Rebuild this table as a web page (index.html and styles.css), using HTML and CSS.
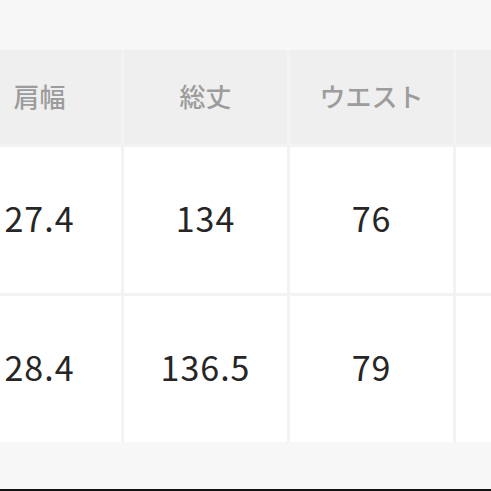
FILE: index.html
```html
<!DOCTYPE html>
<html lang="ja">
<head>
<meta charset="utf-8">
<link rel="stylesheet" href="styles.css">
</head>
<body>
<div class="page">
  <div class="table">
    <div class="cell head">肩幅</div>
    <div class="cell head">総丈</div>
    <div class="cell head">ウエスト</div>
    <div class="cell head"></div>

    <div class="cell">27.4</div>
    <div class="cell">134</div>
    <div class="cell">76</div>
    <div class="cell"></div>

    <div class="cell">28.4</div>
    <div class="cell">136.5</div>
    <div class="cell">79</div>
    <div class="cell"></div>
  </div>
  <div class="rest"></div>
  <div class="edge"></div>
</div>
</body>
</html>
```

FILE: styles.css
```css
html, body {
  margin: 0;
  padding: 0;
  width: 491px;
  height: 491px;
  overflow: hidden;
  background: #f7f7f7;
}
.page {
  display: flex;
  flex-direction: column;
  height: 491px;
  padding-top: 50px;
  box-sizing: border-box;
}
.table {
  display: grid;
  grid-template-columns: repeat(4, 163px);
  grid-template-rows: 94px 146px 146px;
  gap: 3px;
  margin-left: -42px;
  background: #f3f3f3;
  width: max-content;
}
.cell {
  background: #ffffff;
  display: flex;
  align-items: center;
  justify-content: center;
  padding-bottom: 6px;
  box-sizing: border-box;
  font-family: "Noto Sans CJK JP", "Noto Sans", sans-serif;
  font-size: 34px;
  font-weight: 400;
  color: #262626;
  letter-spacing: 1px;
}
.head {
  background: #efefef;
  padding-bottom: 3px;
  font-size: 26px;
  font-weight: 500;
  color: #9c9c9c;
  letter-spacing: 0;
}
.rest {
  flex: 1;
  background: #f7f7f7;
}
.edge {
  height: 2px;
  background: #111111;
}
```
